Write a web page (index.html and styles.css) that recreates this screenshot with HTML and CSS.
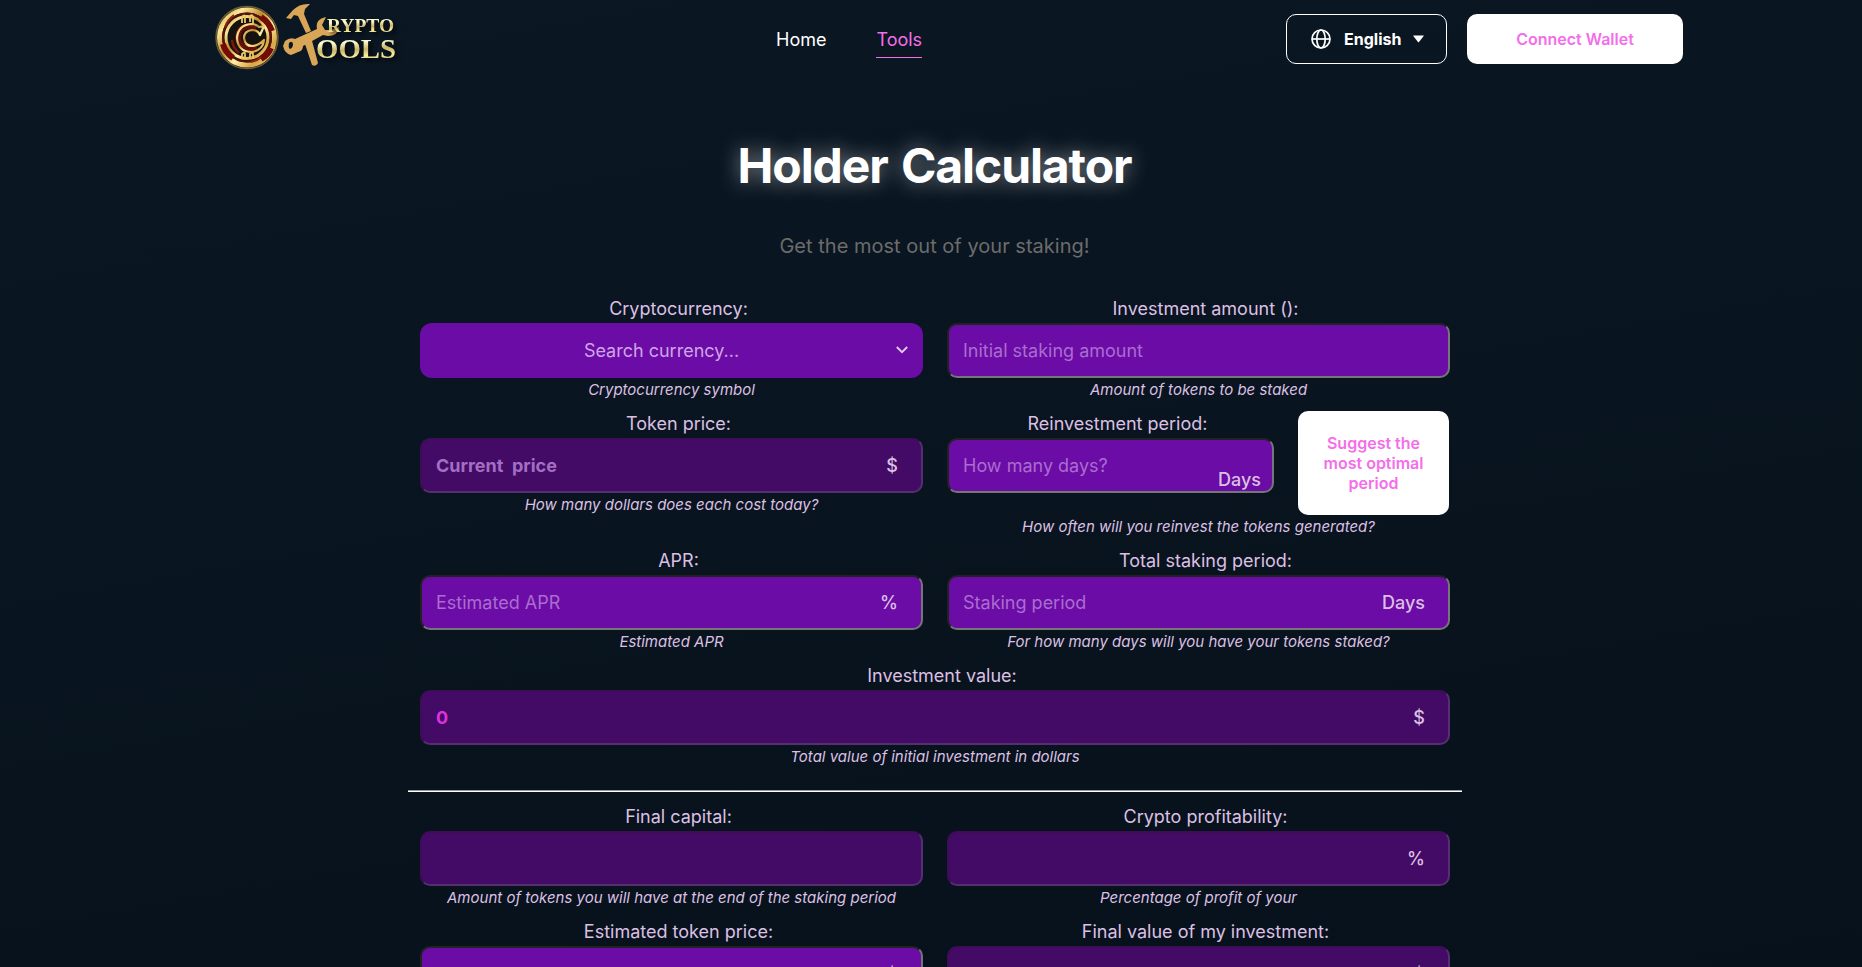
FILE: index.html
```html
<!DOCTYPE html>
<html lang="en">
<head>
<meta charset="utf-8">
<title>Holder Calculator</title>
<link rel="stylesheet" href="styles.css">
</head>
<body>
<header class="header">
  <a class="logo" href="#">
    <svg width="190" height="74" viewBox="0 0 190 74">
      <defs>
        <linearGradient id="gold" x1="0" y1="0" x2="1" y2="1">
          <stop offset="0" stop-color="#c79a3c"/><stop offset=".2" stop-color="#fbe898"/><stop offset=".42" stop-color="#c08a30"/><stop offset=".6" stop-color="#fff0a0"/><stop offset=".8" stop-color="#d9a545"/><stop offset="1" stop-color="#f6e294"/>
        </linearGradient>
        <linearGradient id="letters" x1="0" y1="0" x2=".15" y2="1">
          <stop offset="0" stop-color="#f9f2a8"/><stop offset=".35" stop-color="#fffbd0"/><stop offset=".6" stop-color="#c9b566"/><stop offset=".8" stop-color="#f6eca0"/><stop offset="1" stop-color="#d9c877"/>
        </linearGradient>
      </defs>
      <circle cx="32" cy="37.500" r="31" fill="#14130f" stroke="#6d5f35" stroke-width="1.500"/>
      <circle cx="32" cy="37.500" r="27.500" fill="none" stroke="url(#gold)" stroke-width="5"/>
      <circle cx="32" cy="37.500" r="24" fill="none" stroke="#5e1107" stroke-width="2"/>
      <circle cx="32" cy="37.500" r="21" fill="none" stroke="url(#gold)" stroke-width="3"/>
      <path d="M46 17q8 5 11 14M8 44q2 8 10 14M46 59q7-4 10-11" fill="none" stroke="#740c05" stroke-width="6"/>
      <path d="M10 27q2-7 9-12M36 62q6-1 10-5" fill="none" stroke="#8d2a0c" stroke-width="2"/>
      <path d="M24 53q-6-5-7-13" fill="none" stroke="#7d1707" stroke-width="2.500"/>
      <path d="M41 28q-9-4-15 1-6 8 0 16 7 6 15 1" fill="none" stroke="#651006" stroke-width="6"/>
      <path d="M49 26l-4 9q-2-5-8-5-8 1-8 8 1 8 8 8 6 0 12-6-1 10-12 12-14 0-15-14 1-13 14-14 5 0 8 3z" fill="none" stroke="url(#gold)" stroke-width="2.200" stroke-linejoin="round"/>
      <path d="M27 23v-6q3-3 3 0v6m5-1v-6q3-2 3 1v7M27 59v-5q3-3 3 0v5m5 0v-5q3-3 3 0v5" fill="none" stroke="#ecc664" stroke-width="1.800"/>
      <g fill="#d9a658">
        <path d="M71 18l7-8q7-7 17-6l-5 5-1 5 7 17-5 2-8-17-4-1-3 4z"/>
        <path d="M89 41l7-4 7 26q-2 4-6 2z"/>
        <path d="M70 41q5-4 10-2l22-10q-2-10 9-12l-4 8 3 5 6 0 8-3q-1 9-11 9l-5-1-20 11q0 5-5 6-2 1-7 3-6-1-8-9zm4 2q-1 5 1 6 3-1 3-5-1-4-4-1z" fill-rule="evenodd"/>
      </g>
      <g font-family="Liberation Serif, serif" font-weight="700" fill="url(#letters)" class="logo-letters">
        <text x="112" y="32" font-size="18.500" textLength="67" lengthAdjust="spacingAndGlyphs">RYPTO</text>
        <text x="101" y="58" font-size="27.500" textLength="80" lengthAdjust="spacingAndGlyphs">OOLS</text>
      </g>
    </svg>
  </a>
  <nav class="nav">
    <a class="nav-link" href="#">Home</a>
    <a class="nav-link active" href="#">Tools</a>
  </nav>
  <div class="actions">
    <button class="lang">
      <svg class="globe" width="20" height="20" viewBox="0 0 20 20" fill="none" stroke="#fff" stroke-width="1.700"><circle cx="10" cy="10" r="9"/><ellipse cx="10" cy="10" rx="4.200" ry="9"/><path d="M1 10h18"/></svg>
      <span>English</span>
      <svg class="caret" width="11" height="8" viewBox="0 0 11 8"><path d="M.5.500h10q.5 0 .2.500L6 7q-.5.500-1 0L.3 1Q0 .5.500.500z" fill="#fff"/></svg>
    </button>
    <button class="connect">Connect Wallet</button>
  </div>
</header>
<main class="page">
  <h1 class="title">Holder Calculator</h1>
  <p class="subtitle">Get the most out of your staking!</p>
  <form class="form">
    <div class="field">
      <label class="label">Cryptocurrency:</label>
      <div class="select"><span>Search currency...</span>
        <svg width="12" height="8" viewBox="0 0 12 8" fill="none" stroke="#dcc8e6" stroke-width="2"><path d="M.8 1L6 6.200 11.200 1"/></svg>
      </div>
      <small class="help">Cryptocurrency symbol</small>
    </div>
    <div class="field">
      <label class="label">Investment amount ():</label>
      <div class="control"><input class="input" placeholder="Initial staking amount"></div>
      <small class="help">Amount of tokens to be staked</small>
    </div>
    <div class="field tall">
      <label class="label">Token price:</label>
      <div class="control"><input class="input locked" readonly placeholder="Current  price"><span class="unit">$</span></div>
      <small class="help">How many dollars does each cost today?</small>
    </div>
    <div class="field tall">
      <div class="split">
        <div class="split-main">
          <label class="label">Reinvestment period:</label>
          <div class="control"><input class="input" placeholder="How many days?"><span class="unit low">Days</span></div>
        </div>
        <button type="button" class="suggest">Suggest the most optimal period</button>
      </div>
      <small class="help">How often will you reinvest the tokens generated?</small>
    </div>
    <div class="field">
      <label class="label">APR:</label>
      <div class="control"><input class="input" placeholder="Estimated APR"><span class="unit">%</span></div>
      <small class="help">Estimated APR</small>
    </div>
    <div class="field">
      <label class="label">Total staking period:</label>
      <div class="control"><input class="input" placeholder="Staking period"><span class="unit">Days</span></div>
      <small class="help">For how many days will you have your tokens staked?</small>
    </div>
    <div class="field wide">
      <label class="label">Investment value:</label>
      <div class="control"><input class="input locked" readonly value="0"><span class="unit">$</span></div>
      <small class="help">Total value of initial investment in dollars</small>
    </div>
    <hr class="rule">
    <div class="field">
      <label class="label">Final capital:</label>
      <div class="control"><input class="input locked" readonly></div>
      <small class="help">Amount of tokens you will have at the end of the staking period</small>
    </div>
    <div class="field">
      <label class="label">Crypto profitability:</label>
      <div class="control"><input class="input locked" readonly><span class="unit">%</span></div>
      <small class="help">Percentage of profit of your</small>
    </div>
    <div class="field last">
      <label class="label">Estimated token price:</label>
      <div class="control"><input class="input" placeholder="Estimated  price"><span class="unit">$</span></div>
    </div>
    <div class="field last">
      <label class="label">Final value of my investment:</label>
      <div class="control"><input class="input locked" readonly><span class="unit">$</span></div>
    </div>
  </form>
</main>
</body>
</html>
```
FILE: styles.css
```css
* { box-sizing: border-box; }
body {
  margin: 0;
  height: 967px;
  overflow: hidden;
  background: linear-gradient(170deg, #0b1723, #06111b);
  color: #dcc0e4;
  font-family: Inter, sans-serif;
  font-size: 18px;
}
button { font-family: inherit; border-radius: 10px; padding: 0; }
.header {
  display: grid;
  grid-template-columns: 561px auto 1fr;
  align-items: center;
  height: 78px;
  padding: 0 179px 0 215px;
}
.logo { height: 74px; align-self: start; }
.logo svg { display: block; }
.logo-letters { filter: drop-shadow(3px 3px 2px #000a); }
.nav { display: flex; gap: 50px; }
.nav-link { color: #fff; text-decoration: none; line-height: 34px; border-bottom: 1px solid transparent; margin-top: 2px; }
.nav-link.active { color: #f46eea; border-color: #f46eea; }
.actions { display: flex; justify-content: flex-end; gap: 20px; }
.lang {
  display: flex; align-items: center;
  width: 161px; height: 50px; padding: 0 0 0 24px;
  border: 1px solid #fff; background: transparent;
  color: #fff; font-size: 16px; font-weight: 700;
}
.globe { margin-right: 13px; }
.caret { margin-left: 12px; }
.connect { width: 216px; height: 50px; border: 0; background: #fff; color: #f46eea; font-size: 16px; font-weight: 600; }
.page { width: 1054px; margin: 0 0 0 408px; text-align: center; }
.title { margin: 58px 0 0 -1px; font-size: 48px; line-height: 60px; font-weight: 700; letter-spacing: -1.1px; word-spacing: 3px; color: #fff; text-shadow: 0 0 20px #ffffff80; }
.subtitle { margin: 35px 0 0 -1px; color: #6c6c6c; font-size: 20px; line-height: 30px; font-weight: 400; letter-spacing: .02px; }
.form { display: grid; grid-template-columns: 1fr 1fr; margin-top: 36px; }
.field { padding: 0 12px; height: 115px; }
.field.tall { height: 137px; }
.wide { grid-column: span 2; height: 115px; }
.label { display: block; height: 26px; line-height: 24px; padding-left: 14px; }
.control { position: relative; height: 55px; }
.input {
  display: block; width: 100%; height: 55px; padding: 0 14px;
  border: 2px solid; border-color: #222 #767676 #767676 #222;
  border-radius: 10px; background: #6a0ca5; color: #dd33dd;
  font: inherit; outline: 0;
}
.input::placeholder { color: #aa6cd0; opacity: 1; }
.locked { background: #430a66; border-color: #3d0d58 #553070 #553070 #3d0d58; font-weight: 700; }
.locked::placeholder { color: #a26fc4; }
.unit { position: absolute; right: 25px; top: 17px; line-height: 22px; font-weight: 500; }
.unit.low { top: 31px; right: 13px; }
.select {
  display: flex; align-items: center; justify-content: center; position: relative;
  height: 55px; border-radius: 12px; background: #6a0ca5; color: #cfa5e8; padding-right: 20px;
}
.select svg { position: absolute; right: 15px; top: 23px; }
.help { display: block; font-size: 15px; line-height: 22px; font-style: italic; margin-top: 1px; }
.split { display: flex; justify-content: space-between; height: 103px; padding-right: 1px; }
.split-main { width: 327px; }
.suggest { width: 151px; height: 104px; margin-top: -1px; padding: 0 20px; border: 0; background: #fff; color: #f46eea; font-size: 16px; line-height: 20px; font-weight: 600; }
.rule { grid-column: span 2; width: 100%; height: 2px; margin: 11px 0 13px; border: 0; border-top: 1px solid #999; background: #fff; }
.last .input { padding-top: 2px; }
.last .unit { top: 18px; }
```
